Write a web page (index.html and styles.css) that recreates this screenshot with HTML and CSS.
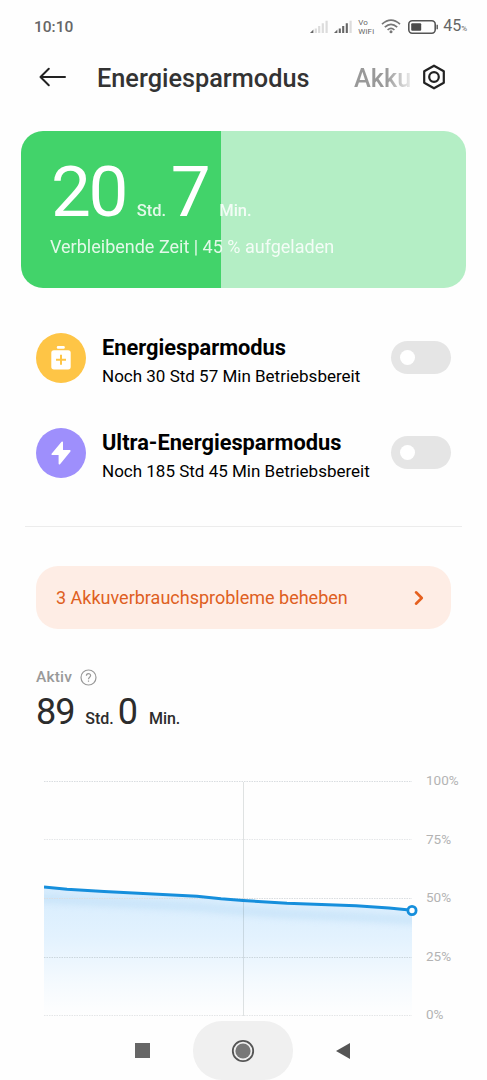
FILE: index.html
```html
<!DOCTYPE html>
<html lang="de">
<head>
	<meta charset="UTF-8">
	<meta name="viewport" content="width=device-width, initial-scale=1.0">
	<title>Energiesparmodus</title>
	<link rel="stylesheet" href="styles.css">
</head>
<body>
	<div class="status-bar">
		<span class="clock">10:10</span>
		<div class="status-icons">
			<svg class="signal" width="18" height="14" viewBox="0 0 18 14">
				<path d="M0 13 L3.4 9.6 V13 Z" fill="#666"/>
				<path d="M5.8 13V8.5M9.2 13V6M12.8 13V3.3M16.6 13V.7" stroke="#dcdcdc" stroke-width="2.2"/>
			</svg>
			<svg class="signal" width="18" height="14" viewBox="0 0 18 14">
				<path d="M0 13 L3.4 9.6 V13 Z" fill="#666"/>
				<path d="M5.8 13V8.5M9.2 13V6M12.8 13V3.3" stroke="#666" stroke-width="2.1"/>
				<path d="M16.6 13V.7" stroke="#dcdcdc" stroke-width="2.2"/>
			</svg>
			<div class="vowifi"><span>Vo</span><span>WiFi</span></div>
			<svg class="wifi" width="20" height="15" viewBox="0 0 20 15" fill="none" stroke="#777" stroke-width="1.7">
				<path d="M1 5.2 Q10 -2.8 19 5.2"/>
				<path d="M3.8 8.2 Q10 2.4 16.2 8.2"/>
				<path d="M6.6 11 Q10 7.6 13.4 11"/>
				<circle cx="10" cy="12.8" r="1.5" fill="#777" stroke="none"/>
			</svg>
			<svg class="battery" width="31" height="14" viewBox="0 0 31 14">
				<rect x=".8" y=".8" width="26.4" height="12.4" rx="3.4" fill="none" stroke="#555" stroke-width="1.6"/>
				<rect x="3.2" y="3.2" width="10" height="7.6" rx="1" fill="#4a4a4a"/>
				<path d="M29.2 4.8v4.4" stroke="#555" stroke-width="1.4"/>
			</svg>
			<span class="percent">45<small>%</small></span>
		</div>
	</div>

	<div class="header">
		<svg class="back" width="28" height="20" viewBox="0 0 28 20" fill="none" stroke="#222" stroke-width="2" stroke-linecap="round" stroke-linejoin="round">
			<path d="M26 10H1.5M9.8 1.8L1.5 10l8.3 8.2"/>
		</svg>
		<h1>Energiesparmodus</h1>
		<span class="next-tab">Akku</span>
		<svg class="settings" width="24" height="26" viewBox="0 0 24 26" fill="none" stroke="#222" stroke-width="2.2" stroke-linejoin="round">
			<path d="M12 1.7L21.8 7.2V18.8L12 24.3L2.2 18.8V7.2Z"/>
			<circle cx="12" cy="13" r="4.8"/>
		</svg>
	</div>

	<div class="battery-card">
		<div class="remaining">
			<span class="num">20</span><span class="unit std">Std.</span><span class="num">7</span><span class="unit min">Min.</span>
		</div>
		<p>Verbleibende Zeit | 45 % aufgeladen</p>
	</div>

	<div class="modes">
		<div class="mode">
			<div class="mode-icon yellow">
				<svg width="20" height="24" viewBox="0 0 20 24">
					<rect x="5.8" y="0" width="8" height="2.7" rx="1.2" fill="#fff"/>
					<rect x=".3" y="4.2" width="19.4" height="19.2" rx="2.6" fill="#fff"/>
					<path d="M10 8.8v10M5 13.8h10" stroke="#fec546" stroke-width="2"/>
				</svg>
			</div>
			<div class="mode-text">
				<h2>Energiesparmodus</h2>
				<p>Noch 30 Std 57 Min Betriebsbereit</p>
			</div>
			<div class="switch"></div>
		</div>
		<div class="mode">
			<div class="mode-icon purple">
				<svg width="20" height="24" viewBox="0 0 20 24">
					<path d="M11.2 1.2L1.2 13.2H8.4V22.8L18.8 9.9H11.2Z" fill="#fff" stroke="#fff" stroke-width="1.6" stroke-linejoin="round"/>
				</svg>
			</div>
			<div class="mode-text">
				<h2>Ultra-Energiesparmodus</h2>
				<p>Noch 185 Std 45 Min Betriebsbereit</p>
			</div>
			<div class="switch"></div>
		</div>
	</div>

	<div class="problems">
		<span>3 Akkuverbrauchsprobleme beheben</span>
		<svg width="10" height="16" viewBox="0 0 10 16" fill="none" stroke="#e5601f" stroke-width="2.6" stroke-linecap="round" stroke-linejoin="round">
			<path d="M2 2.3L7.8 8L2 13.7"/>
		</svg>
	</div>

	<div class="active">
		<div class="active-label">
			<span>Aktiv</span>
			<svg width="17" height="17" viewBox="0 0 17 17" fill="none" stroke="#999" stroke-width="1.2">
				<circle cx="8.5" cy="8.5" r="7.5"/>
				<path d="M6.4 6.8C6.4 4 10.6 4 10.6 6.6C10.6 8.3 8.5 8.1 8.5 10.2M8.5 11.4V12.7"/>
			</svg>
		</div>
		<div class="active-time">
			<span class="num">89</span><span class="unit std">Std.</span><span class="num">0</span><span class="unit min">Min.</span>
		</div>
	</div>

	<div class="chart">
		<svg width="376" height="240" viewBox="0 0 376 240">
			<defs>
				<linearGradient id="fill" x1="0" y1="106" x2="0" y2="236" gradientUnits="userSpaceOnUse">
					<stop offset="0" stop-color="#d6ecfd"/>
					<stop offset=".4" stop-color="#e3f2fe"/>
					<stop offset=".75" stop-color="#f5fafe"/>
					<stop offset="1" stop-color="#fefefe"/>
				</linearGradient>
				<filter id="soft" x="-5%" y="-100%" width="110%" height="300%">
					<feGaussianBlur stdDeviation="3"/>
				</filter>
				<clipPath id="area">
					<path d="M0 107L23 109.2L60 111.5L153 116.2L177 118.7L199 120.5L243 123.3L312 125.8L345 128L368 130.2V236H0Z"/>
				</clipPath>
			</defs>
			<g clip-path="url(#area)">
				<rect y="100" width="368" height="136" fill="url(#fill)"/>
				<path d="M-10 118L23 120L60 122L153 127L199 131L243 134L312 137L380 141" fill="none" stroke="#b9dcf6" stroke-width="8" opacity=".5" filter="url(#soft)"/>
			</g>
			<g stroke="#d9dde0" stroke-dasharray="1.5 1">
				<path d="M0 1.5H368"/>
				<path d="M0 59.5H368" stroke="#e4e6e8"/>
				<path d="M0 118.5H368"/>
				<path d="M0 177.5H368" stroke="#cbd6dd"/>
				<path d="M0 235.5H368" stroke="#e4e6e8"/>
			</g>
			<path d="M199.5 2V236" stroke="#566" stroke-opacity=".18"/>
			<path d="M0 107L23 109.2L60 111.5L153 116.2L177 118.7L199 120.5L243 123.3L312 125.8L345 128L368 130.2" fill="none" stroke="#168fdc" stroke-width="3"/>
			<circle cx="368" cy="130.5" r="4.1" fill="#fff" stroke="#168fdc" stroke-width="2.8"/>
		</svg>
		<div class="scale">
			<span>100%</span>
			<span>75%</span>
			<span>50%</span>
			<span>25%</span>
			<span>0%</span>
		</div>
	</div>

	<div class="nav">
		<div class="recent"></div>
		<div class="home">
			<svg width="24" height="24" viewBox="0 0 24 24">
				<circle cx="12" cy="12" r="10.2" fill="none" stroke="#555" stroke-width="1.8"/>
				<circle cx="12" cy="12" r="7.6" fill="#777"/>
			</svg>
		</div>
		<svg width="14" height="16" viewBox="0 0 14 16">
			<path d="M0 8L14 0V16Z" fill="#555"/>
		</svg>
	</div>
</body>
</html>
```

FILE: styles.css
```css
* {
	box-sizing: border-box;
}

body {
	margin: 0;
	width: 487px;
	height: 1080px;
	overflow: hidden;
	display: flex;
	flex-direction: column;
	background-color: #fefefe;
	color: #000;
	font-family: Roboto, sans-serif;
}

h1, h2, p {
	margin: 0;
}

span, h1, h2, p {
	white-space: nowrap;
}

.status-bar {
	display: flex;
	justify-content: space-between;
	align-items: center;
	height: 54px;
	padding: 0 20px 0 34px;
	color: #666;
}

.clock {
	padding-top: 1px;
	font-size: 15.5px;
	font-weight: 500;
}

.status-icons {
	display: flex;
	align-items: center;
}

.signal {
	margin-right: 6px;
}

.vowifi {
	display: flex;
	flex-direction: column;
	width: 17px;
	margin-right: 6px;
	font-size: 8px;
	line-height: 9px;
	letter-spacing: 0.2px;
	color: #666;
}

.wifi {
	margin-right: 7px;
}

.battery {
	margin-right: 4px;
}

.percent {
	padding-top: 2px;
	font-size: 16px;
	line-height: 18px;
}

.percent small {
	font-size: 8px;
}

.header {
	display: flex;
	align-items: center;
	height: 46px;
	padding-left: 39px;
}

.back {
	margin-right: 30px;
}

h1 {
	width: 257px;
	padding-top: 3px;
	font-size: 25.3px;
	font-weight: 500;
	color: #333;
}

.next-tab {
	width: 58px;
	margin-right: 10px;
	padding-top: 3px;
	overflow: hidden;
	font-size: 25.3px;
	font-weight: 500;
	background: linear-gradient(to right, #999 55%, #eee 100%);
	-webkit-background-clip: text;
	color: transparent;
}

.battery-card {
	width: 445px;
	height: 157px;
	margin: 31px 0 0 21px;
	padding: 21px 0 0 30px;
	border-radius: 22px;
	background: linear-gradient(to right, #42d36a 45%, #b4eec5 45%);
	color: #fff;
}

.remaining, .active-time {
	display: flex;
	align-items: baseline;
}

.remaining {
	height: 82px;
}

.remaining .num {
	font-size: 71px;
	line-height: 80px;
	letter-spacing: -2.5px;
}

.remaining .unit {
	font-size: 16.5px;
	font-weight: 500;
	opacity: 0.85;
}

.remaining .std {
	width: 34px;
	margin-left: 11px;
}

.remaining .min {
	margin-left: 11px;
}

.battery-card p {
	margin-left: -1px;
	font-size: 18px;
	line-height: 26px;
	opacity: 0.85;
}

.modes {
	height: 240px;
	margin: 0 25px;
	padding: 45px 11px 0;
	border-bottom: 1px solid #ececec;
}

.mode {
	display: flex;
	align-items: center;
	height: 50px;
	margin-bottom: 45px;
}

.mode-icon {
	display: flex;
	align-items: center;
	justify-content: center;
	width: 50px;
	height: 50px;
	margin-right: 16px;
	border-radius: 50%;
}

.yellow {
	background-color: #fec546;
}

.purple {
	background-color: #9e8ffc;
}

.mode-text {
	flex: 1;
	padding-top: 7px;
}

.mode h2 {
	font-size: 21.8px;
	font-weight: 700;
	line-height: 30px;
}

.mode p {
	font-size: 17px;
	line-height: 27px;
}

.switch {
	width: 60px;
	height: 33px;
	padding: 9px;
	border-radius: 17px;
	background-color: #e5e5e5;
}

.switch::before {
	content: "";
	display: block;
	width: 15px;
	height: 15px;
	border-radius: 50%;
	background-color: #fff;
}

.problems {
	display: flex;
	align-items: center;
	justify-content: space-between;
	height: 63px;
	margin: 39px 36px 0;
	padding: 0 27px 0 20px;
	border-radius: 22px;
	background-color: #feede5;
	color: #de5f22;
	font-size: 18px;
}

.active {
	height: 151px;
	padding: 38px 0 0 36px;
}

.active-label {
	display: flex;
	align-items: center;
	gap: 8px;
	height: 20px;
	font-size: 15.5px;
	font-weight: 500;
	letter-spacing: 0.2px;
	color: #999;
}

.active-time {
	margin-top: 1px;
	color: #2c2c2c;
}

.active-time .num {
	font-size: 36px;
	line-height: 48px;
	letter-spacing: -1.1px;
}

.active-time .unit {
	font-size: 16px;
	font-weight: 500;
}

.active-time .std {
	margin: 0 4px 0 11px;
}

.active-time .min {
	margin-left: 12px;
}

.chart {
	display: flex;
	height: 240px;
	padding-left: 44px;
}

.scale {
	display: flex;
	flex-direction: column;
	justify-content: space-between;
	height: 250px;
	margin: -8px 0 0 6px;
	font-size: 13.5px;
	line-height: 16px;
	color: #b3b3b3;
}

.nav {
	display: flex;
	align-items: center;
	justify-content: center;
	gap: 43px;
	height: 59px;
	margin-top: 1px;
	padding-right: 2px;
}

.recent {
	width: 15px;
	height: 15px;
	background-color: #666;
}

.home {
	display: flex;
	align-items: center;
	justify-content: center;
	width: 100px;
	height: 59px;
	border-radius: 29px;
	background-color: #f0f0f0;
}
```
